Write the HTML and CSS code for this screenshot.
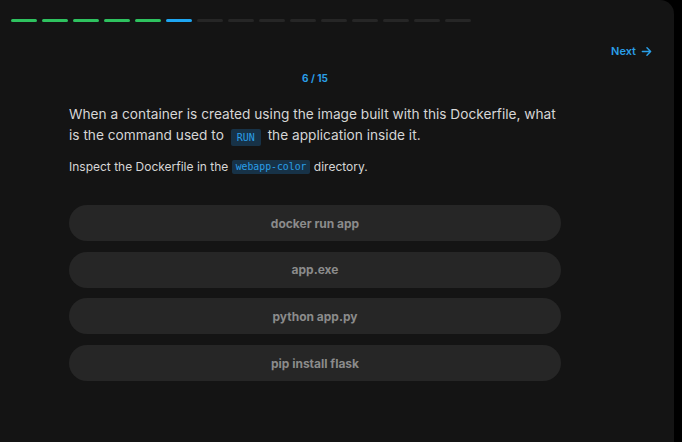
FILE: index.html
```html
<!DOCTYPE html>
<html>
<head>
<meta charset="utf-8">
<link rel="stylesheet" href="styles.css">
</head>
<body>
<div class="panel">
  <div class="progress">
    <span class="seg done"></span><span class="seg done"></span><span class="seg done"></span><span class="seg done"></span><span class="seg done"></span>
    <span class="seg current"></span>
    <span class="seg"></span><span class="seg"></span><span class="seg"></span><span class="seg"></span><span class="seg"></span><span class="seg"></span><span class="seg"></span><span class="seg"></span><span class="seg"></span>
  </div>
  <div class="topnav">
    <a class="next">Next
      <svg width="11" height="11" viewBox="0 0 12 12" fill="none" stroke="currentColor" stroke-width="1.6" stroke-linecap="round" stroke-linejoin="round"><path d="M1.5 6h9M6.5 2l4 4-4 4"/></svg>
    </a>
  </div>
  <div class="content">
    <div class="counter">6 / 15</div>
    <p class="question">When a container is created using the image built with this Dockerfile, what is the command used to <code class="chip big">RUN</code> the application inside it.</p>
    <p class="hint">Inspect the Dockerfile in the <code class="chip">webapp-color</code> directory.</p>
    <div class="options">
      <div class="option">docker run app</div>
      <div class="option">app.exe</div>
      <div class="option">python app.py</div>
      <div class="option">pip install flask</div>
    </div>
  </div>
</div>
</body>
</html>
```
FILE: styles.css
```css
* { box-sizing: border-box; }
html, body { margin: 0; padding: 0; background: #000; }
body {
  font-family: Inter, "Noto Sans", sans-serif;
  width: 682px;
  height: 442px;
  overflow: hidden;
}
.panel {
  width: 674px;
  height: 442px;
  background: #141414;
  border-top-right-radius: 14px;
  padding-top: 19px;
}
.progress {
  display: flex;
  gap: 5.5px;
  margin-left: 11px;
  width: 460px;
}
.seg {
  flex: 1;
  height: 3px;
  border-radius: 2px;
  background: #262626;
}
.seg.done { background: #2ec25f; }
.seg.current { background: #1ea6f2; }
.topnav {
  display: flex;
  justify-content: flex-end;
  padding-right: 22px;
  margin-top: 19px;
  height: 20px;
}
.next {
  display: flex;
  align-items: center;
  gap: 5px;
  color: #2a9fe8;
  font-size: 11px;
  font-weight: 600;
}
.content {
  margin-left: 69px;
  width: 492px;
}
.counter {
  text-align: center;
  color: #2a9fe8;
  font-size: 10px;
  font-weight: 700;
  margin-top: 11px;
}
.question {
  margin: 20px 0 0;
  color: #d6d6d6;
  font-size: 13.7px;
  line-height: 21px;
  width: 500px;
}
.chip {
  display: inline-block;
  font-family: "DejaVu Sans Mono", "Liberation Mono", monospace;
  background: #173247;
  color: #2a9fe8;
  border-radius: 2px;
  font-size: 9.8px;
  line-height: 14px;
  padding: 0 4px;
  vertical-align: 1px;
}
.chip.big {
  font-size: 10px;
  line-height: 17px;
  padding: 0 6px;
  margin: 0 3px;
  vertical-align: -1px;
}
.hint {
  margin: 13px 0 0;
  color: #d6d6d6;
  font-size: 12px;
  line-height: 16px;
}
.options {
  margin-top: 30px;
  display: flex;
  flex-direction: column;
  gap: 10.7px;
}
.option {
  height: 36px;
  border-radius: 18px;
  background: #262626;
  color: #8b8b8b;
  font-size: 12px;
  font-weight: 700;
  display: flex;
  align-items: center;
  justify-content: center;
}
```
